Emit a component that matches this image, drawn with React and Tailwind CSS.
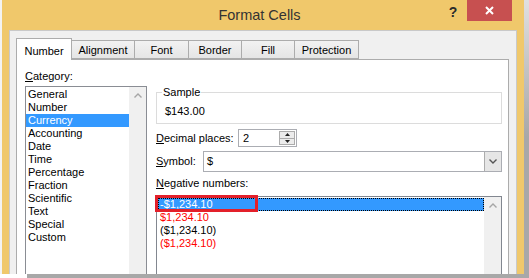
import React from "react";

const categories = [
  "General",
  "Number",
  "Currency",
  "Accounting",
  "Date",
  "Time",
  "Percentage",
  "Fraction",
  "Scientific",
  "Text",
  "Special",
  "Custom",
];

const negatives = [
  { label: "-$1,234.10", red: false, selected: true },
  { label: "$1,234.10", red: true },
  { label: "($1,234.10)", red: false },
  { label: "($1,234.10)", red: true },
];

const tabs = [
  { label: "Number", w: "w-[56px]" },
  { label: "Alignment", w: "w-[64px]" },
  { label: "Font", w: "w-[55px]" },
  { label: "Border", w: "w-[54px]" },
  { label: "Fill", w: "w-[54px]" },
  { label: "Protection", w: "w-[65px]" },
];

// ── small drawings ───────────────────────────────────────────
function Chevron({ down = false, className = "" }) {
  return (
    <svg width="8" height="5" viewBox="0 0 8 5" className={className}>
      <path
        d={down ? "M0.5 0.5 L4 4 L7.5 0.5" : "M0.5 4.5 L4 1 L7.5 4.5"}
        fill="none"
        stroke="currentColor"
        strokeWidth="1.4"
      />
    </svg>
  );
}

function Triangle({ down = false }) {
  return (
    <svg width="5" height="3" viewBox="0 0 5 3">
      <path d={down ? "M0 0 H5 L2.5 3 Z" : "M0 3 H5 L2.5 0 Z"} fill="#222" />
    </svg>
  );
}

// ── scrollbar strip (disabled) ───────────────────────────────
function ScrollStrip() {
  return (
    <div className="w-[17px] shrink-0 bg-[#f0f0f0] flex flex-col items-center">
      <div className="h-[17px] flex items-center justify-center text-[#a6a6a6]">
        <Chevron />
      </div>
    </div>
  );
}

export default function App() {
  return (
    <div className="w-[529px] h-[278px] overflow-hidden bg-white flex flex-col font-['Liberation_Sans',Arial,sans-serif] text-[11px] leading-[13px] text-black">
      <div className="flex h-[274px]">
        {/* sheet behind the dialog */}
        <div className="w-[2px] bg-[#f3f3f3]" />

        {/* window */}
        <div className="w-[522px] bg-[#f0c86b] flex flex-col">
          {/* title bar */}
          <div className="h-[30px] flex items-start">
            <div className="flex-1 pl-[74px] pt-[6px] text-center text-[14.5px] leading-[18px] text-[#333333]">
              Format Cells
            </div>
            <div className="w-[20px] pt-[4px] text-center text-[14px] leading-[16px] font-bold text-[#2b2b2b]">?</div>
            <div className="w-[4px]" />
            <div className="w-[45px] h-[21px] bg-[#c75050] flex items-center justify-center">
              <svg width="9" height="9" viewBox="0 0 9 9">
                <path d="M1 1 L8 8 M8 1 L1 8" stroke="#fff" strokeWidth="2" />
              </svg>
            </div>
            <div className="w-[12px]" />
          </div>

          {/* client area */}
          <div className="flex-1 mx-[7px] bg-[#f0f0f0] border-t border-l border-r border-[#c9c9c9] flex flex-col pt-[7px] pl-[6px] pr-[7px] min-h-0">
            {/* tabs */}
            <div className="flex items-end h-[22px] relative z-10">
              {tabs.map((t, i) =>
                i === 0 ? (
                  <div
                    key={t.label}
                    className={`${t.w} h-[22px] bg-white border border-b-0 border-[#acacac] flex items-center justify-center pt-[3px]`}
                  >
                    {t.label}
                  </div>
                ) : (
                  <div
                    key={t.label}
                    className={`${t.w} -ml-px h-[19px] mb-px bg-gradient-to-b from-[#f2f2f2] to-[#e5e5e5] border border-[#acacac] flex items-center justify-center pt-[2px]`}
                  >
                    {t.label}
                  </div>
                )
              )}
            </div>

            {/* tab panel */}
            <div className="w-[493px] flex-1 -mt-px bg-white border border-b-0 border-[#acacac] flex pl-[8px] pt-[10px] min-h-0 overflow-hidden">
              {/* category column */}
              <div className="w-[122px] shrink-0 flex flex-col">
                <div className="h-[13px]">
                  <u>C</u>ategory:
                </div>
                <div className="mt-[3px] flex-1 border border-[#8a8d94] border-b-0 flex">
                  <div className="flex-1 pt-[1px]">
                    {categories.map((c) => (
                      <div
                        key={c}
                        className={`h-[13px] pl-[2px] ${c === "Currency" ? "bg-[#3399ff] text-white" : ""}`}
                      >
                        {c}
                      </div>
                    ))}
                  </div>
                  <ScrollStrip />
                </div>
              </div>

              {/* detail column */}
              <div className="w-[346px] ml-[9px] flex flex-col">
                {/* sample */}
                <div className="mt-[22px] h-[32px] border border-[#dcdcdc] relative pl-[8px] pt-[12px]">
                  <span className="absolute left-[5px] -top-[7px] bg-white px-px">Sample</span>
                  $143.00
                </div>

                {/* decimal places */}
                <div className="mt-[5px] flex items-center h-[18px]">
                  <div className="w-[82px]">
                    <u>D</u>ecimal places:
                  </div>
                  <div className="w-[59px] h-[18px] border border-[#abadb3] flex">
                    <div className="flex-1 pl-[4px] pt-[2px]">2</div>
                    <div className="w-[17px] flex flex-col p-px pl-0">
                      <div className="flex-1 border border-[#acacac] bg-[#ececec] flex items-center justify-center">
                        <Triangle />
                      </div>
                      <div className="flex-1 -mt-px border border-[#acacac] bg-[#ececec] flex items-center justify-center">
                        <Triangle down />
                      </div>
                    </div>
                  </div>
                </div>

                {/* symbol */}
                <div className="mt-[4px] flex items-center h-[21px]">
                  <div className="w-[47px]">
                    <u>S</u>ymbol:
                  </div>
                  <div className="flex-1 h-[21px] border border-[#abadb3] flex">
                    <div className="flex-1 pl-[3px] pt-[3px]">$</div>
                    <div className="w-[17px] bg-[#e6e6e6] border-l border-[#acacac] flex items-center justify-center text-[#555555]">
                      <Chevron down />
                    </div>
                  </div>
                </div>

                {/* negative numbers */}
                <div className="mt-[5px] h-[13px]">
                  <u>N</u>egative numbers:
                </div>
                <div className="mt-[6px] flex-1 border border-b-0 border-[#828790] flex">
                  <div className="flex-1 relative pt-px pl-px">
                    {negatives.map((n, i) => (
                      <div
                        key={i}
                        className={`h-[13px] pl-[2px] ${
                          n.selected
                            ? "bg-[#3399ff] text-white outline-1 outline-dotted outline-black -outline-offset-1"
                            : n.red
                            ? "text-[#ff0000]"
                            : ""
                        }`}
                      >
                        {n.label}
                      </div>
                    ))}
                    {/* highlight annotation */}
                    <div className="absolute left-[-2px] top-[-2px] w-[103px] h-[17px] border-[3px] border-[#e3202a]" />
                  </div>
                  <ScrollStrip />
                </div>
              </div>
            </div>
          </div>
        </div>

        {/* window shadow */}
        <div className="w-[5px] bg-gradient-to-b from-[#e0e0e0] to-[#a8a8a8] via-[#a8a8a8]" />
      </div>
      <div className="h-[4px] ml-[27px] bg-[#a8a8a8]" />
    </div>
  );
}
